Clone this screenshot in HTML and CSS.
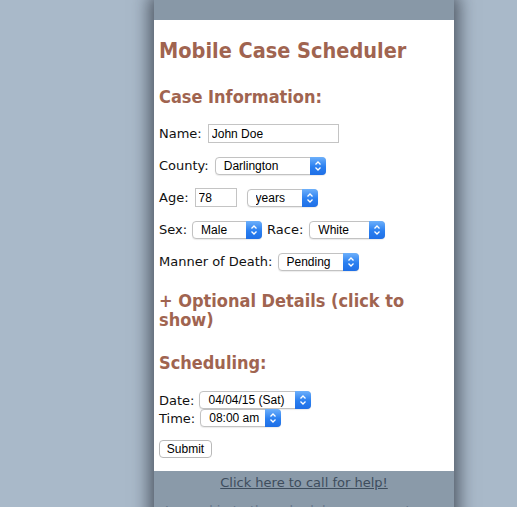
FILE: index.html
```html
<!DOCTYPE html>
<html>
<head>
<title>Mobile Case Scheduler</title>
<link rel="stylesheet" href="styles.css">
</head>
<body>
	<div class="column">
		<div class="topbar"></div>
		<article class="content">
			<h1>Mobile Case Scheduler</h1>
			<h2 class="section-title">Case Information:</h2>
			<form>
				<div class="row">
					<label for="name">Name:</label>
					<input class="textbox name-box" id="name" type="text" value="John Doe">
				</div>
				<div class="row">
					<label for="county">County:</label>
					<span class="picker county-picker">
						<select id="county"><option>Darlington</option></select>
						<span class="stepper"><svg viewBox="0 0 16 18" width="16" height="18"><path d="M5.5 7.5 8 5l2.5 2.5M5.5 10.5 8 13l2.5-2.5" fill="none" stroke="#fff" stroke-width="1.3"/></svg></span>
					</span>
				</div>
				<div class="row">
					<label for="age">Age:</label>
					<input class="textbox age-box" id="age" type="text" value="78">
					<span class="picker unit-picker">
						<select id="unit"><option>years</option></select>
						<span class="stepper"><svg viewBox="0 0 16 18" width="16" height="18"><path d="M5.5 7.5 8 5l2.5 2.5M5.5 10.5 8 13l2.5-2.5" fill="none" stroke="#fff" stroke-width="1.3"/></svg></span>
					</span>
				</div>
				<div class="row">
					<label for="sex">Sex:</label>
					<span class="picker sex-picker">
						<select id="sex"><option>Male</option></select>
						<span class="stepper"><svg viewBox="0 0 16 18" width="16" height="18"><path d="M5.5 7.5 8 5l2.5 2.5M5.5 10.5 8 13l2.5-2.5" fill="none" stroke="#fff" stroke-width="1.3"/></svg></span>
					</span>
					<label for="race">Race:</label>
					<span class="picker race-picker">
						<select id="race"><option>White</option></select>
						<span class="stepper"><svg viewBox="0 0 16 18" width="16" height="18"><path d="M5.5 7.5 8 5l2.5 2.5M5.5 10.5 8 13l2.5-2.5" fill="none" stroke="#fff" stroke-width="1.3"/></svg></span>
					</span>
				</div>
				<div class="row">
					<label for="manner">Manner of Death:</label>
					<span class="picker manner-picker">
						<select id="manner"><option>Pending</option></select>
						<span class="stepper"><svg viewBox="0 0 16 18" width="16" height="18"><path d="M5.5 7.5 8 5l2.5 2.5M5.5 10.5 8 13l2.5-2.5" fill="none" stroke="#fff" stroke-width="1.3"/></svg></span>
					</span>
				</div>

				<h2 class="toggle">+ Optional Details (click to show)</h2>
				<h2 class="section-title schedule-title">Scheduling:</h2>

				<div class="row tight">
					<label for="date">Date:</label>
					<span class="picker date-picker">
						<select id="date"><option>04/04/15 (Sat)</option></select>
						<span class="stepper"><svg viewBox="0 0 16 18" width="16" height="18"><path d="M5.5 7.5 8 5l2.5 2.5M5.5 10.5 8 13l2.5-2.5" fill="none" stroke="#fff" stroke-width="1.3"/></svg></span>
					</span>
				</div>
				<div class="row tight">
					<label for="time">Time:</label>
					<span class="picker time-picker">
						<select id="time"><option>08:00 am</option></select>
						<span class="stepper"><svg viewBox="0 0 16 18" width="16" height="18"><path d="M5.5 7.5 8 5l2.5 2.5M5.5 10.5 8 13l2.5-2.5" fill="none" stroke="#fff" stroke-width="1.3"/></svg></span>
					</span>
				</div>
				<button class="submit" type="button">Submit</button>
			</form>
		</article>
		<footer class="footer">
			<a href="#" class="help-link">Click here to call for help!</a>
			<p class="footnote">Logged in to the scheduler as a guest user</p>
		</footer>
	</div>
</body>
</html>
```

FILE: styles.css
```css
html, body{
	height:100%;
}
body{
	margin:0;
	background-color:#a9b9c9;
	font-family:"DejaVu Sans", Verdana, sans-serif;
	font-size:13px;
	color:#111;
	overflow:hidden;
}
.column{
	width:300px;
	margin-left:154px;
	min-height:100%;
	background-color:#8a9aa9;
	box-shadow:0 0 16px 5px rgba(20,25,35,0.6);
}
.topbar{
	height:20px;
	background-color:#8898a7;
}
.content{
	background-color:white;
	padding:18px 5px 13px 5px;
}
h1{
	margin:0;
	font-family:"DejaVu Sans Condensed", "DejaVu Sans", Tahoma, sans-serif;
	font-size:21.5px;
	line-height:26px;
	color:#a06450;
}
h2{
	margin:0;
	font-family:"DejaVu Sans Condensed", "DejaVu Sans", Tahoma, sans-serif;
	font-size:18px;
	color:#a06450;
}
.section-title{
	margin-top:22px;
	line-height:22px;
}
form{
	margin-top:16px;
}
.row{
	display:flex;
	align-items:center;
	gap:5px;
	height:19px;
	margin-bottom:13px;
	white-space:nowrap;
}
.row.tight{
	height:18px;
	margin-bottom:0;
}
label{
	font-size:13px;
}
.textbox{
	box-sizing:border-box;
	height:19px;
	border:1px solid #c4c4c4;
	padding:0 3px;
	font-family:"Liberation Sans", Arial, sans-serif;
	font-size:12px;
	color:#000;
	margin-left:1px;
}
.name-box{ width:131px; }
.age-box{ width:42px; }
.picker{
	position:relative;
	display:inline-block;
	height:18px;
}
.picker select{
	-webkit-appearance:none;
	appearance:none;
	box-sizing:border-box;
	width:100%;
	height:18px;
	border:1px solid #c2c2c2;
	border-radius:4px;
	background-color:white;
	padding:0 18px 0 8px;
	font-family:"Liberation Sans", Arial, sans-serif;
	font-size:12px;
	color:#000;
	box-shadow:0 1px 1px rgba(0,0,0,0.08);
}
.stepper{
	position:absolute;
	top:0;
	right:0;
	width:16px;
	height:18px;
	border-radius:0 4px 4px 0;
	background:linear-gradient(#6db0fb, #2a7ff0 55%, #1f6fe6);
	display:flex;
}
.county-picker{ width:111px; margin-left:1px; }
.unit-picker{ width:71px; margin-left:5px; }
.sex-picker{ width:70px; }
.race-picker{ width:76px; margin-left:1px; }
.manner-picker{ width:81px; }
.date-picker{ width:112px; }
.time-picker{ width:81px; }
.toggle{
	line-height:19px;
	margin-top:20px;
	cursor:pointer;
}
.schedule-title{
	margin-top:23px;
	margin-bottom:17px;
}
.submit{
	margin-top:13px;
	height:18px;
	width:53px;
	padding:0;
	background-color:white;
	border:1px solid #b9b9b9;
	border-radius:4px;
	font-family:"Liberation Sans", Arial, sans-serif;
	font-size:12px;
	color:#000;
}
.footer{
	text-align:center;
	padding-top:4px;
	line-height:16px;
}
.help-link{
	color:#3e4d5d;
	font-size:13px;
}
.footnote{
	margin:12px 0 0 0;
	color:#66768a;
	font-size:13px;
}
```
